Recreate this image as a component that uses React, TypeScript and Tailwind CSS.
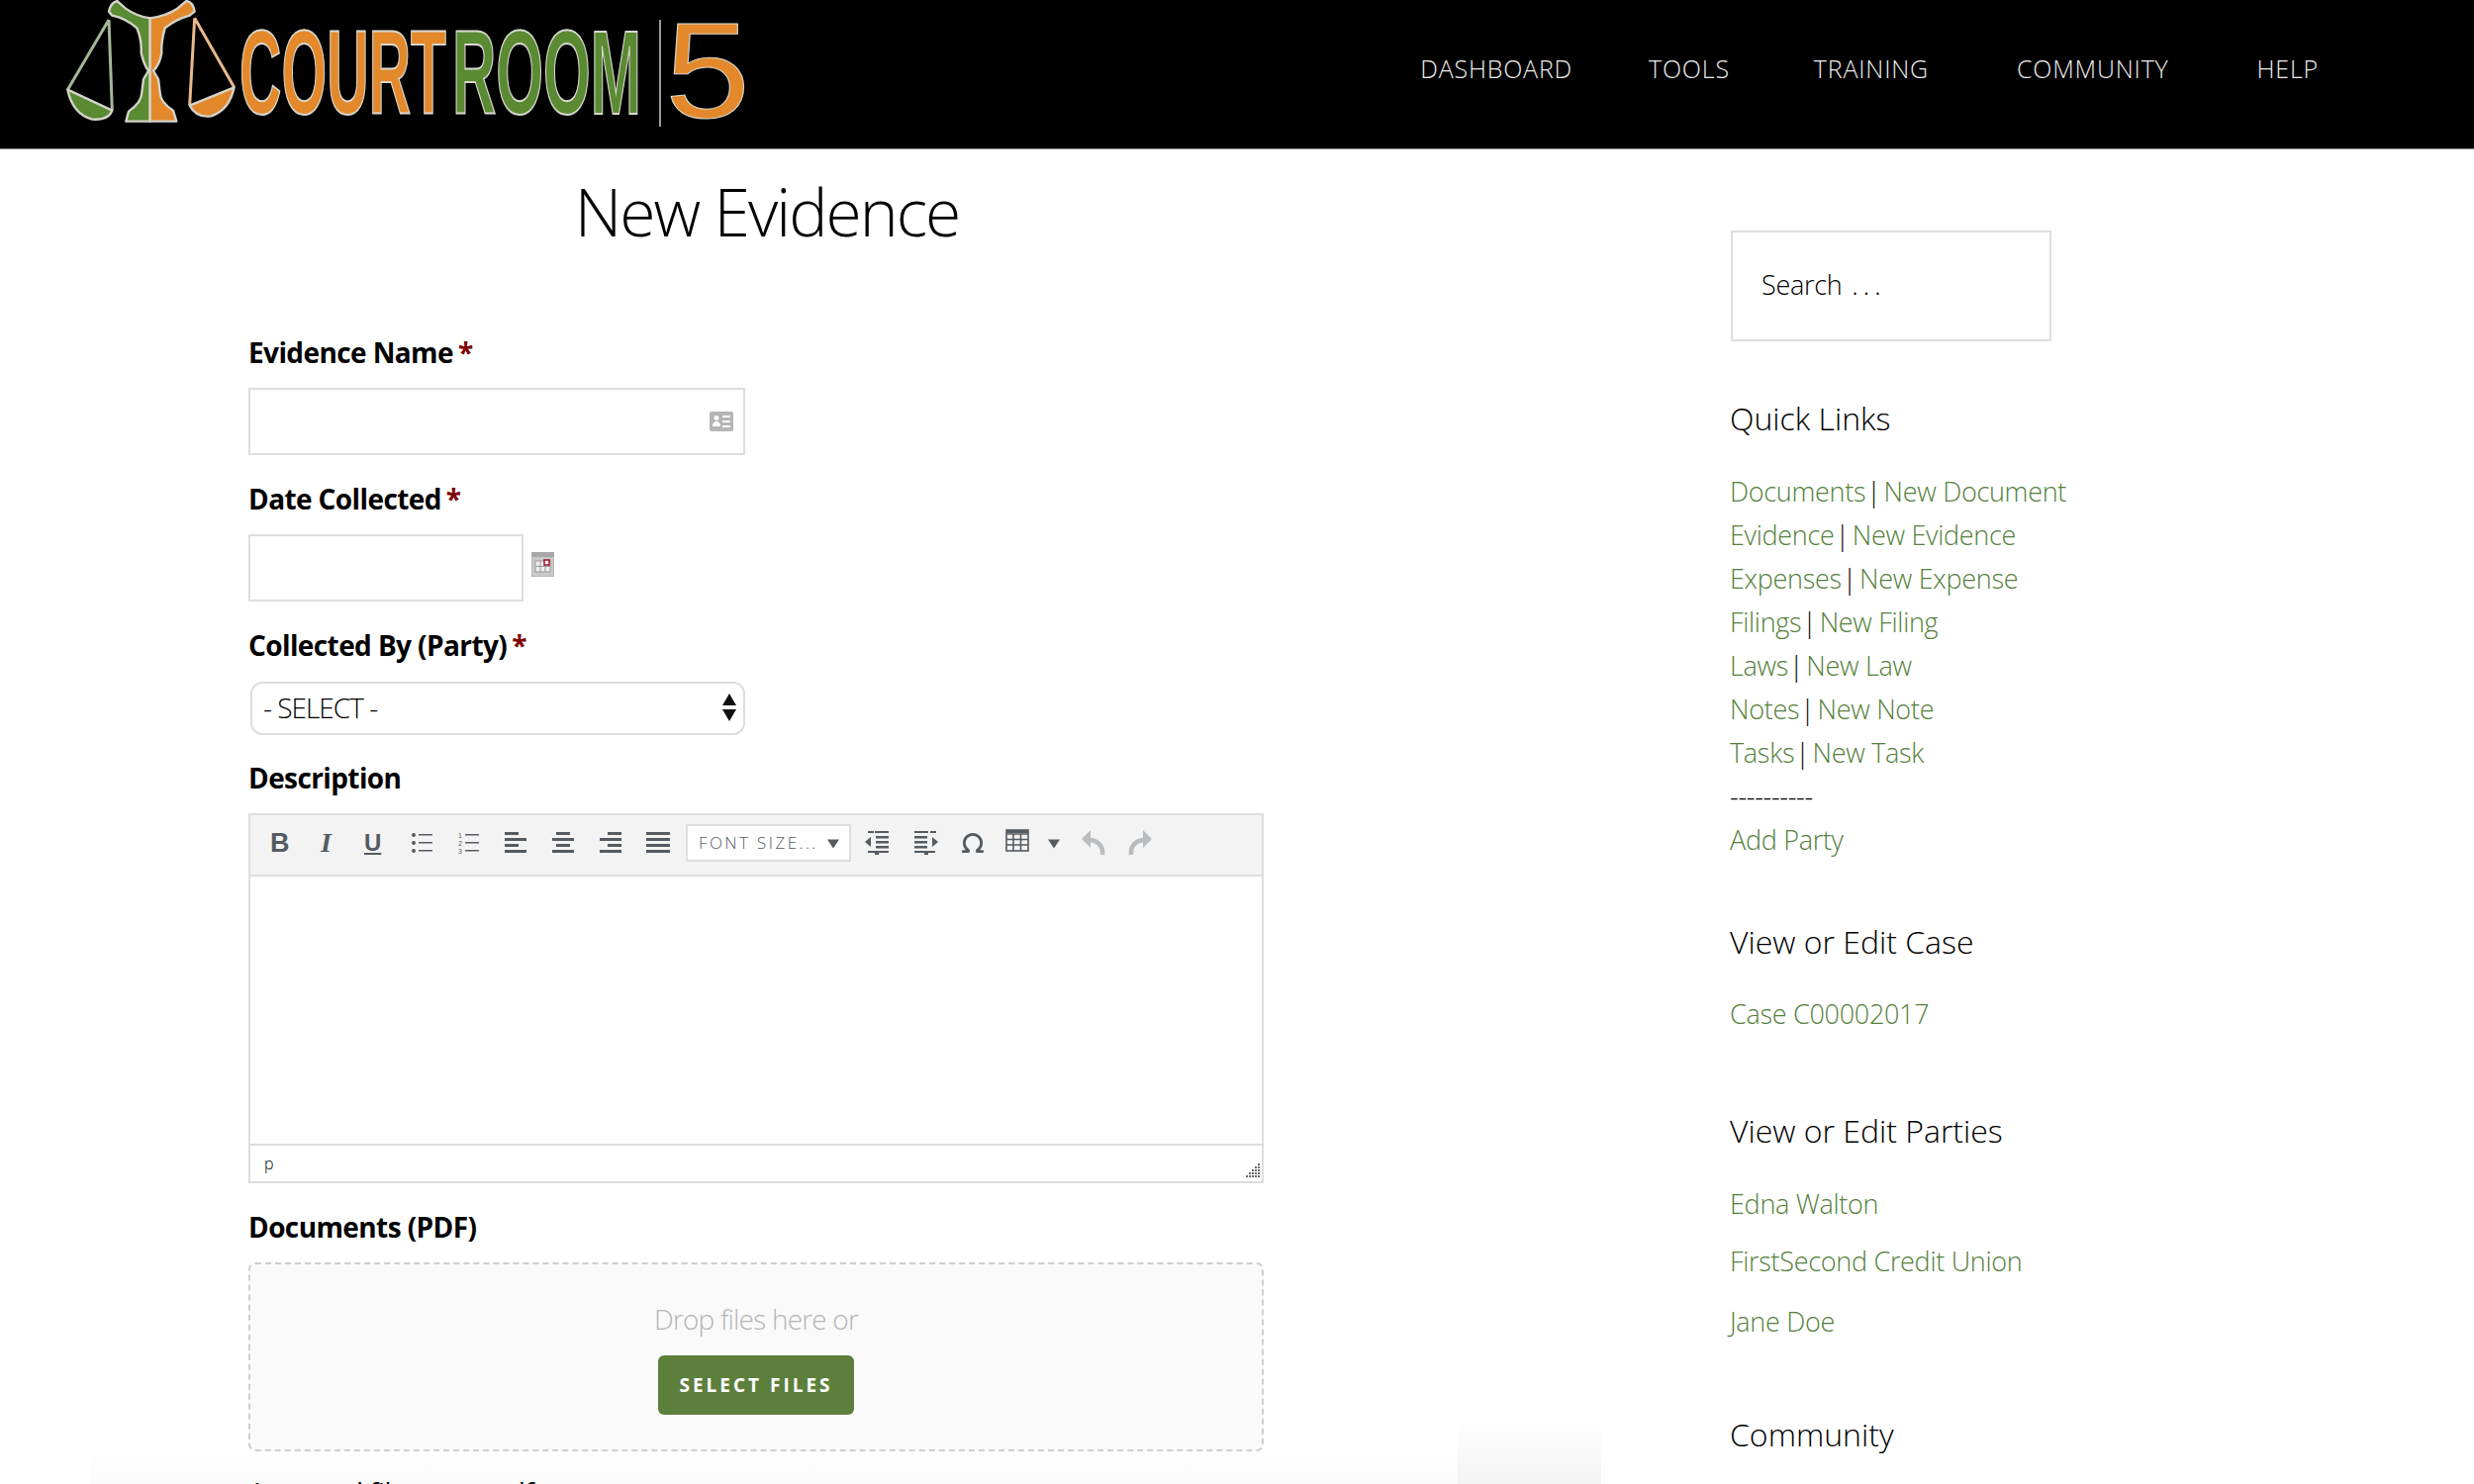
import { Omega } from "lucide-react";

const navItems = [
  { label: "DASHBOARD", cls: "ml-0" },
  { label: "TOOLS", cls: "ml-[77px]" },
  { label: "TRAINING", cls: "ml-[85px]" },
  { label: "COMMUNITY", cls: "ml-[89px]" },
  { label: "HELP", cls: "ml-[89px]" },
];

const quickLinks = [
  ["Documents", "New Document"],
  ["Evidence", "New Evidence"],
  ["Expenses", "New Expense"],
  ["Filings", "New Filing"],
  ["Laws", "New Law"],
  ["Notes", "New Note"],
  ["Tasks", "New Task"],
];

function Logo() {
  return (
    <svg width="720" height="150" viewBox="0 0 720 150" className="block">
      {/* scales, drawn at 3x */}
      <g transform="scale(0.3333)" stroke="#d4d4cc" strokeWidth="7" strokeLinejoin="round">
        <path d="M180 60 L55 272 M180 60 L190 335" fill="none" stroke="#a3b896" strokeWidth="9" />
        <path d="M55 272 L190 335 Q180 365 130 362 Q70 345 55 272 Z" fill="#5a8a32" />
        <path d="M305 55 Q265 50 230 25 L205 3 Q185 8 180 35 L190 47 Q230 55 265 85 Q280 120 278 160 Q285 195 300 215 L285 240 L280 280 Q280 310 240 338 L232 368 L305 368 Z" fill="#5a8a32" />
        <path d="M440 55 L560 265 M440 55 L425 320" fill="none" stroke="#e8b98a" strokeWidth="9" />
        <path d="M560 265 L425 320 Q445 358 490 352 Q545 335 560 265 Z" fill="#e3892b" />
        <path d="M305 55 Q350 50 385 28 L415 3 Q435 5 440 35 L425 47 Q385 58 350 85 Q338 130 340 160 Q335 195 315 215 L330 240 L335 280 Q335 310 375 335 L385 368 L305 368 Z" fill="#e3892b" />
      </g>
      <g fontFamily="'Liberation Sans',sans-serif" fontWeight="700" stroke="#d8d8d0" strokeWidth="2" fontSize="121">
        <text x="192" y="115" fill="#e3892b" textLength="209" lengthAdjust="spacingAndGlyphs">COURT</text>
        <text x="407" y="115" fill="#5a8a32" textLength="191" lengthAdjust="spacingAndGlyphs">ROOM</text>
      </g>
      <path d="M617 20 V128" stroke="#9a9a9a" strokeWidth="2" />
      <text x="622" y="119" fontFamily="'Liberation Sans',sans-serif" fontSize="137" fill="#e3892b" stroke="#d8d8d0" strokeWidth="1" textLength="86" lengthAdjust="spacingAndGlyphs">5</text>
    </svg>
  );
}

function Req() {
  return <span className="ml-[5px] text-[#7d0000]">*</span>;
}

function Label({ children, cls }: { children: React.ReactNode; cls: string }) {
  return <div className={`text-[28px] leading-[38px] font-bold tracking-[-0.6px] text-black ${cls}`}>{children}</div>;
}

function Caret({ cls = "" }: { cls?: string }) {
  return (
    <svg width="12" height="12" viewBox="0 0 24 24" className={cls} fill="#545b62">
      <path d="M0 5 H24 L12 23 Z" />
    </svg>
  );
}

function Bars({ rows }: { rows: [number, number][] }) {
  return (
    <svg width="24" height="24" viewBox="0 0 24 24" fill="#545b62">
      {rows.map(([x, w], i) => (
        <rect key={i} x={x} y={i * 6 + 1} width={w} height="3" />
      ))}
    </svg>
  );
}

function Toolbar() {
  return (
    <div className="h-[62px] bg-[#f3f3f3] border-b-2 border-[#dedede] flex items-center pl-[20px] pb-[4px] text-[#545b62]">
      <span className="w-[51px] text-[27px] leading-none font-['Liberation_Sans'] font-bold">B</span>
      <span className="w-[44px] text-[28px] leading-none font-['Liberation_Serif'] font-bold italic">I</span>
      <span className="w-[47px] text-[24px] leading-none font-['Liberation_Sans'] font-bold underline">U</span>
      <div className="w-[48px]">
        <svg width="22" height="22" viewBox="0 0 22 22" fill="#545b62">
          <circle cx="3" cy="3" r="2" /><circle cx="3" cy="11" r="2" /><circle cx="3" cy="19" r="2" />
          <rect x="8" y="2" width="14" height="1.5" /><rect x="8" y="10" width="14" height="1.5" /><rect x="8" y="18" width="14" height="1.5" />
        </svg>
      </div>
      <div className="w-[47px]">
        <svg width="22" height="22" viewBox="0 0 22 22" fill="#545b62">
          <text x="0" y="6" fontSize="7" fontFamily="Liberation Sans">1</text>
          <text x="0" y="14" fontSize="7" fontFamily="Liberation Sans">2</text>
          <text x="0" y="22" fontSize="7" fontFamily="Liberation Sans">3</text>
          <rect x="7" y="2" width="14" height="1.5" /><rect x="7" y="10" width="14" height="1.5" /><rect x="7" y="18" width="14" height="1.5" />
        </svg>
      </div>
      <div className="w-[48px]"><Bars rows={[[0, 14], [0, 22], [0, 14], [0, 22]]} /></div>
      <div className="w-[48px]"><Bars rows={[[4, 14], [0, 22], [4, 14], [0, 22]]} /></div>
      <div className="w-[47px]"><Bars rows={[[8, 14], [0, 22], [8, 14], [0, 22]]} /></div>
      <div className="w-[40px]"><Bars rows={[[0, 24], [0, 24], [0, 24], [0, 24]]} /></div>
      <div className="w-[167px] h-[38px] bg-white border-2 border-[#dedede] flex items-center pl-[11px] text-[17px] tracking-[2.4px] font-light text-[#545b62]">
        <span className="flex-1 whitespace-nowrap">FONT SIZE...</span>
        <Caret cls="mr-[10px]" />
      </div>
      <svg width="24" height="24" viewBox="0 0 24 24" fill="#545b62" className="ml-[14px]">
        <rect x="3" y="0" width="6" height="2" /><rect x="10" y="0" width="14" height="2" />
        <rect x="11" y="5" width="13" height="2.5" /><rect x="11" y="10" width="13" height="2.5" /><rect x="11" y="15" width="13" height="2.5" />
        <path d="M0 11 L6 6 V16 Z" /><rect x="3" y="20" width="21" height="2" /><rect x="10" y="22" width="4" height="2" />
      </svg>
      <svg width="24" height="24" viewBox="0 0 24 24" fill="#545b62" className="ml-[26px]">
        <rect x="0" y="0" width="14" height="2" /><rect x="16" y="0" width="6" height="2" />
        <rect x="0" y="5" width="13" height="2.5" /><rect x="0" y="10" width="13" height="2.5" /><rect x="0" y="15" width="13" height="2.5" />
        <path d="M24 11 L18 6 V16 Z" /><rect x="0" y="20" width="21" height="2" /><rect x="10" y="22" width="4" height="2" />
      </svg>
      <Omega className="ml-[22px] w-[26px] h-[26px] text-[#545b62]" strokeWidth={2.6} />
      <svg width="24" height="24" viewBox="0 0 24 24" fill="none" stroke="#545b62" strokeWidth="1.6" className="ml-[20px] mb-[4px]">
        <rect x="1" y="1" width="22" height="21" /><path d="M1 5 H23 M1 10.5 H23 M1 16 H23 M8 5 V22 M15.5 5 V22" />
        <rect x="1" y="1" width="22" height="3" fill="#545b62" stroke="none" />
      </svg>
      <Caret cls="ml-[19px]" />
      <svg width="24" height="26" viewBox="0 0 24 26" fill="none" className="ml-[22px]">
        <path d="M21 25 C22 15 15 10 7 10" stroke="#b9bdbf" strokeWidth="4.5" />
        <path d="M0 9 L9 0 V18 Z" fill="#b9bdbf" />
      </svg>
      <svg width="24" height="26" viewBox="0 0 24 26" fill="none" className="ml-[23px]">
        <path d="M3 25 C2 15 9 10 17 10" stroke="#b9bdbf" strokeWidth="4.5" />
        <path d="M24 9 L15 0 V18 Z" fill="#b9bdbf" />
      </svg>
    </div>
  );
}

function Link({ children }: { children: React.ReactNode }) {
  return <span className="text-[#55803c]">{children}</span>;
}

function SideHeading({ children, cls }: { children: React.ReactNode; cls: string }) {
  return <h3 className={`-ml-[1px] text-[32px] leading-[44px] font-light tracking-normal text-black ${cls}`}>{children}</h3>;
}

export default function App() {
  return (
    <div className="h-[1500px] overflow-hidden bg-white text-black font-['Open_Sans','Noto_Sans',sans-serif]">
      <header className="h-[151px] bg-black border-b border-[#8a8a8a] flex">
        <div className="pl-[50px]"><Logo /></div>
        <nav className="ml-auto mr-[157px] pt-[51px] flex text-[25px] leading-[36px] font-light tracking-[0.8px] text-[#ececec]">
          {navItems.map((n) => (
            <span key={n.label} className={n.cls}>{n.label}</span>
          ))}
        </nav>
      </header>

      <div className="flex">
        <main className="w-[1749px] pl-[251px] shrink-0 relative">
          <h1 className="w-[1048px] pt-[17px] text-center text-[66px] leading-[90px] font-light tracking-[-2px]">New Evidence</h1>

          <Label cls="mt-[79px]">Evidence Name<Req /></Label>
          <div className="mt-[17px] w-[502px] h-[68px] border-2 border-[#dedede] flex items-center justify-end pr-[10px]">
            <svg width="24" height="20" viewBox="0 0 24 20" fill="#b5b5b5">
              <path d="M2 0 H22 a2 2 0 0 1 2 2 V18 a2 2 0 0 1 -2 2 H2 a2 2 0 0 1 -2 -2 V2 a2 2 0 0 1 2 -2 Z M7 4 a2.5 2.5 0 1 0 0.01 0 Z M3 15 h8 q0 -5 -4 -5 q-4 0 -4 5 Z M13 4 h8 v2 h-8 Z M13 9 h8 v2 h-8 Z M13 14 h8 v2 h-8 Z" fillRule="evenodd" />
            </svg>
          </div>

          <Label cls="mt-[25px]">Date Collected<Req /></Label>
          <div className="mt-[17px] flex items-center">
            <div className="w-[278px] h-[68px] border-2 border-[#dedede]"></div>
            <svg width="23" height="25" viewBox="0 0 23 25" className="ml-[8px] -mt-[7px]">
              <rect x="0" y="0" width="23" height="25" fill="#c9c9c9" stroke="#aaa" />
              <rect x="0" y="0" width="23" height="5" fill="#a8a8a8" />
              <rect x="4" y="9" width="15" height="11" fill="#ededed" stroke="#999" />
              <path d="M9 9 V20 M14 9 V20 M4 14.5 H19" stroke="#999" />
              <rect x="13" y="8" width="5" height="5" fill="#fff" stroke="#a01020" strokeWidth="1.5" />
            </svg>
          </div>

          <Label cls="mt-[25px]">Collected By (Party)<Req /></Label>
          <div className="mt-[18px] ml-[2px] w-[500px] h-[54px] border-2 border-[#dedede] rounded-[12px] flex items-center justify-between pl-[11px] pr-[7px] pb-[3px] text-[28px] font-light tracking-[-1px]">
            <span>- SELECT -</span>
            <svg width="14" height="28" viewBox="0 0 14 28" fill="#111"><path d="M7 0 L14 12 H0 Z M0 16 H14 L7 28 Z" /></svg>
          </div>

          <Label cls="mt-[24px]">Description</Label>
          <div className="mt-[17px] w-[1026px] h-[374px] border-2 border-[#dedede] flex flex-col">
            <Toolbar />
            <div className="h-[272px] border-b-2 border-[#dedede]"></div>
            <div className="flex-1 flex items-center justify-between pl-[14px] pr-[2px] text-[16px] leading-none font-light">
              <span>p</span>
              <svg width="14" height="14" viewBox="0 0 14 14" fill="#666" className="self-end mb-[4px]">
                <path d="M12 0h2v2h-2zM12 3h2v2h-2zM9 3h2v2h-2zM12 6h2v2h-2zM9 6h2v2h-2zM6 6h2v2h-2zM12 9h2v2h-2zM9 9h2v2h-2zM6 9h2v2h-2zM3 9h2v2h-2zM12 12h2v2h-2zM9 12h2v2h-2zM6 12h2v2h-2zM3 12h2v2h-2zM0 12h2v2h-2z" />
              </svg>
            </div>
          </div>

          <Label cls="mt-[25px]">Documents (PDF)</Label>
          <div className="mt-[17px] w-[1026px] h-[191px] border-2 border-dashed border-[#cfcfcf] rounded-[7px] bg-[#fafafa] flex flex-col items-center">
            <p className="mt-[36px] text-[28px] leading-[38px] font-light tracking-[-0.8px] text-[#b5b5b5]">Drop files here or</p>
            <div className="mt-[18px] w-[198px] h-[60px] rounded-[6px] bg-[#5c7f3c] text-white text-[19px] font-bold tracking-[3px] flex items-center justify-center">SELECT FILES</div>
          </div>
          <div className="absolute left-[91px] w-[1382px] top-[1319px] h-[30px] bg-gradient-to-b from-[#fefefe] to-[#fbfbfb]"></div>
          <div className="absolute left-[1473px] w-[145px] top-[1282px] h-[67px] bg-gradient-to-b from-white to-[#f4f4f4]"></div>
          <p className="relative mt-[22px] text-[28px] leading-[38px] tracking-[-0.6px] text-black">Accepted file types: pdf</p>
        </main>

        <aside className="flex-1 pt-[82px] text-[27px] leading-[44px] font-light tracking-[-0.3px]">
          <div className="w-[324px] h-[112px] border-2 border-[#dedede] flex items-center pl-[29px] pb-[2px] text-black">
            <span>Search</span>
            <span className="ml-[10px] tracking-[5px]">...</span>
          </div>
          <SideHeading cls="mt-[56px]">Quick Links</SideHeading>
          <div className="mt-[30px] -ml-[1px]">
            {quickLinks.map(([a, b]) => (
              <div key={a}>
                <Link>{a}</Link><span className="ml-[1px] mr-[3px] text-black">|</span><Link>{b}</Link>
              </div>
            ))}
            <div>----------</div>
            <div><Link>Add Party</Link></div>
          </div>
          <SideHeading cls="mt-[59px]">View or Edit Case</SideHeading>
          <div className="mt-[29px] -ml-[1px]"><Link>Case C00002017</Link></div>
          <SideHeading cls="mt-[74px]">View or Edit Parties</SideHeading>
          <div className="mt-[30px] -ml-[1px]"><Link>Edna Walton</Link></div>
          <div className="mt-[14px] -ml-[1px]"><Link>FirstSecond Credit Union</Link></div>
          <div className="mt-[17px] -ml-[1px]"><Link>Jane Doe</Link></div>
          <SideHeading cls="mt-[70px]">Community</SideHeading>
        </aside>
      </div>
    </div>
  );
}
